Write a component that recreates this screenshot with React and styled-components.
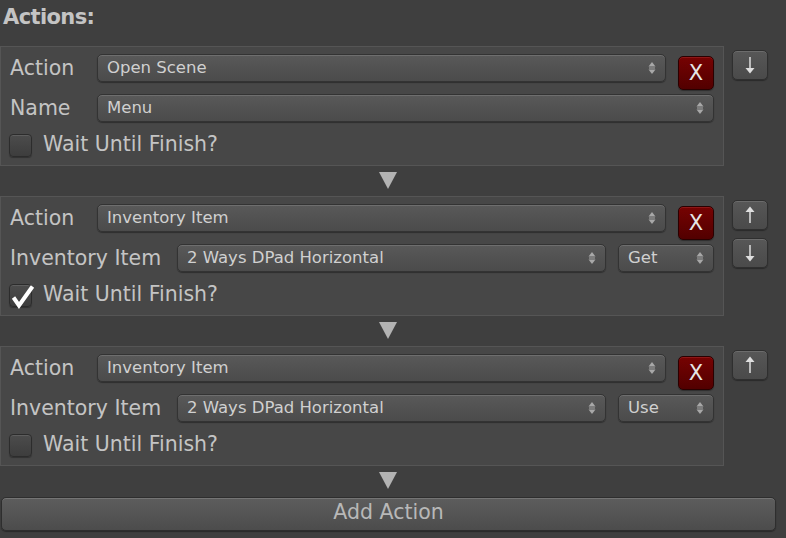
import React from "react";
import styled, { createGlobalStyle } from "styled-components";

const Global = createGlobalStyle`
  html, body { margin: 0; padding: 0; background: #3f3f3f; }
  body {
    font-family: "DejaVu Sans", "Lucida Grande", sans-serif;
    width: 786px; height: 538px; overflow: hidden;
  }
`;

const Page = styled.div`
  display: flex;
  flex-direction: column;
  width: 786px;
  height: 538px;
`;

const Title = styled.div`
  height: 46px;
  box-sizing: border-box;
  padding: 5px 0 0 3px;
  font-weight: bold;
  font-size: 21px;
  letter-spacing: -0.6px;
  line-height: 24px;
  color: #c4c4c4;
`;

const Block = styled.div`
  display: flex;
  align-items: flex-start;
`;

const Panel = styled.div`
  width: 724px;
  height: 120px;
  box-sizing: border-box;
  border: 1px solid #555555;
  background: #474747;
  padding: 7px 9px 1px 9px;
  display: flex;
  flex-direction: column;
`;

const Row = styled.div`
  display: flex;
  align-items: flex-start;
  height: ${(p) => p.$h || 40}px;
`;

const Label = styled.div`
  width: ${(p) => p.$w}px;
  flex: none;
  font-size: 20.5px;
  line-height: 28px;
  color: #c4c4c4;
  white-space: nowrap;
`;

const Dropdown = styled.div`
  flex: ${(p) => (p.$w ? "none" : "1")};
  width: ${(p) => (p.$w ? `${p.$w}px` : "auto")};
  height: 28px;
  box-sizing: border-box;
  border: 1px solid #333333;
  border-radius: 5px;
  background: linear-gradient(#595959, #4b4b4b);
  box-shadow: inset 0 1px 0 rgba(255, 255, 255, 0.13), 0 1px 1px rgba(0, 0, 0, 0.35);
  display: flex;
  align-items: center;
  justify-content: space-between;
  padding: 0 9px 0 9px;
  font-size: 16.5px;
  line-height: 26px;
  color: #d0d0d0;
  white-space: nowrap;
  margin-left: ${(p) => p.$ml || 0}px;
`;

const RemoveButton = styled.div`
  flex: none;
  width: 36px;
  height: 34px;
  margin: 2px 0 0 12px;
  box-sizing: border-box;
  border: 1px solid #2a0000;
  border-radius: 5px;
  background: linear-gradient(#760202, #520000);
  box-shadow: inset 0 1px 0 rgba(255, 120, 120, 0.18), 0 1px 1px rgba(0, 0, 0, 0.35);
  display: flex;
  align-items: center;
  justify-content: center;
  color: #e6e6e6;
  font-size: 21px;
  line-height: 1;
`;

const CheckRow = styled.div`
  display: flex;
  align-items: flex-start;
  height: 30px;
`;

const CheckBox = styled.div`
  position: relative;
  flex: none;
  width: 23px;
  height: 23px;
  margin-left: -1px;
  box-sizing: border-box;
  border: 1px solid #2c2c2c;
  border-radius: 4px;
  background: linear-gradient(#4c4c4c, #3d3d3d);
  box-shadow: inset 0 1px 0 rgba(255, 255, 255, 0.1), 0 1px 1px rgba(0, 0, 0, 0.3);
`;

const CheckMark = styled.svg`
  position: absolute;
  left: 1px;
  top: 0px;
  overflow: visible;
`;

const CheckLabel = styled.div`
  margin: -2px 0 0 11px;
  font-size: 20.5px;
  line-height: 24px;
  color: #c4c4c4;
  white-space: nowrap;
`;

const Side = styled.div`
  display: flex;
  flex-direction: column;
  gap: 8px;
  margin-left: 8px;
  padding-top: 4px;
`;

const SideButton = styled.div`
  width: 36px;
  height: 30px;
  box-sizing: border-box;
  border: 1px solid #2f2f2f;
  border-radius: 5px;
  background: linear-gradient(#575757, #4a4a4a);
  box-shadow: inset 0 1px 0 rgba(255, 255, 255, 0.13), 0 1px 1px rgba(0, 0, 0, 0.35);
  display: flex;
  align-items: center;
  justify-content: center;
`;

const ArrowRow = styled.div`
  width: 776px;
  height: 30px;
  box-sizing: border-box;
  padding-top: 6px;
  display: flex;
  justify-content: center;
`;

const AddButton = styled.div`
  width: 775px;
  height: 34px;
  margin: 1px 0 0 1px;
  box-sizing: border-box;
  border: 1px solid #2e2e2e;
  border-radius: 5px;
  background: linear-gradient(#5d5d5d, #4c4c4c);
  box-shadow: inset 0 1px 0 rgba(255, 255, 255, 0.15), 0 1px 1px rgba(0, 0, 0, 0.35);
  display: flex;
  align-items: center;
  justify-content: center;
  padding-bottom: 4px;
  font-size: 20.5px;
  color: #b8b8b8;
`;

const Spinner = () => (
  <svg width="8" height="14" viewBox="0 0 8 14">
    <path d="M0.5 5.5 L4 1 L7.5 5.5 Z" fill="#a8a8a8" />
    <rect x="1" y="6.5" width="6" height="1" fill="#a8a8a8" />
    <path d="M0.5 8.5 L4 13 L7.5 8.5 Z" fill="#a8a8a8" />
  </svg>
);

const VArrow = ({ up }) => (
  <svg width="12" height="18" viewBox="0 0 12 18">
    {up ? (
      <>
        <rect x="5.25" y="4" width="1.5" height="13" fill="#dedede" />
        <path d="M1.5 6 L6 0.5 L10.5 6 Z" fill="#dedede" />
      </>
    ) : (
      <>
        <rect x="5.25" y="1" width="1.5" height="13" fill="#dedede" />
        <path d="M1.5 12 L6 17.5 L10.5 12 Z" fill="#dedede" />
      </>
    )}
  </svg>
);

const DownTriangle = () => (
  <svg width="18" height="17" viewBox="0 0 18 17">
    <path d="M0 0 L18 0 L9 17 Z" fill="#b3b3b3" />
  </svg>
);

const Select = ({ children, w, ml }) => (
  <Dropdown $w={w} $ml={ml}>
    <span>{children}</span>
    <Spinner />
  </Dropdown>
);

const Wait = ({ checked }) => (
  <CheckRow>
    <CheckBox>
      {checked && (
        <CheckMark width="23" height="23" viewBox="0 0 23 23">
          <path
            d="M2.5 12.5 L8 20.5 L21.5 1.5"
            fill="none"
            stroke="#ffffff"
            strokeWidth="4"
            strokeLinejoin="miter"
          />
        </CheckMark>
      )}
    </CheckBox>
    <CheckLabel>Wait Until Finish?</CheckLabel>
  </CheckRow>
);

const actions = [
  { type: "Open Scene", second: { label: "Name", w: 87, value: "Menu" }, checked: false, up: false, down: true },
  { type: "Inventory Item", second: { label: "Inventory Item", w: 167, value: "2 Ways DPad Horizontal", extra: "Get" }, checked: true, up: true, down: true },
  { type: "Inventory Item", second: { label: "Inventory Item", w: 167, value: "2 Ways DPad Horizontal", extra: "Use" }, checked: false, up: true, down: false },
];

export default function App() {
  return (
    <Page>
      <Global />
      <Title>Actions:</Title>
      {actions.map((a, i) => (
        <React.Fragment key={i}>
          <Block>
            <Panel>
              <Row>
                <Label $w={87}>Action</Label>
                <Select>{a.type}</Select>
                <RemoveButton>X</RemoveButton>
              </Row>
              <Row>
                <Label $w={a.second.w}>{a.second.label}</Label>
                <Select>{a.second.value}</Select>
                {a.second.extra && (
                  <Select w={96} ml={12}>
                    {a.second.extra}
                  </Select>
                )}
              </Row>
              <Wait checked={a.checked} />
            </Panel>
            <Side>
              {a.up && (
                <SideButton>
                  <VArrow up />
                </SideButton>
              )}
              {a.down && (
                <SideButton>
                  <VArrow />
                </SideButton>
              )}
            </Side>
          </Block>
          <ArrowRow>
            <DownTriangle />
          </ArrowRow>
        </React.Fragment>
      ))}
      <AddButton>Add Action</AddButton>
    </Page>
  );
}
